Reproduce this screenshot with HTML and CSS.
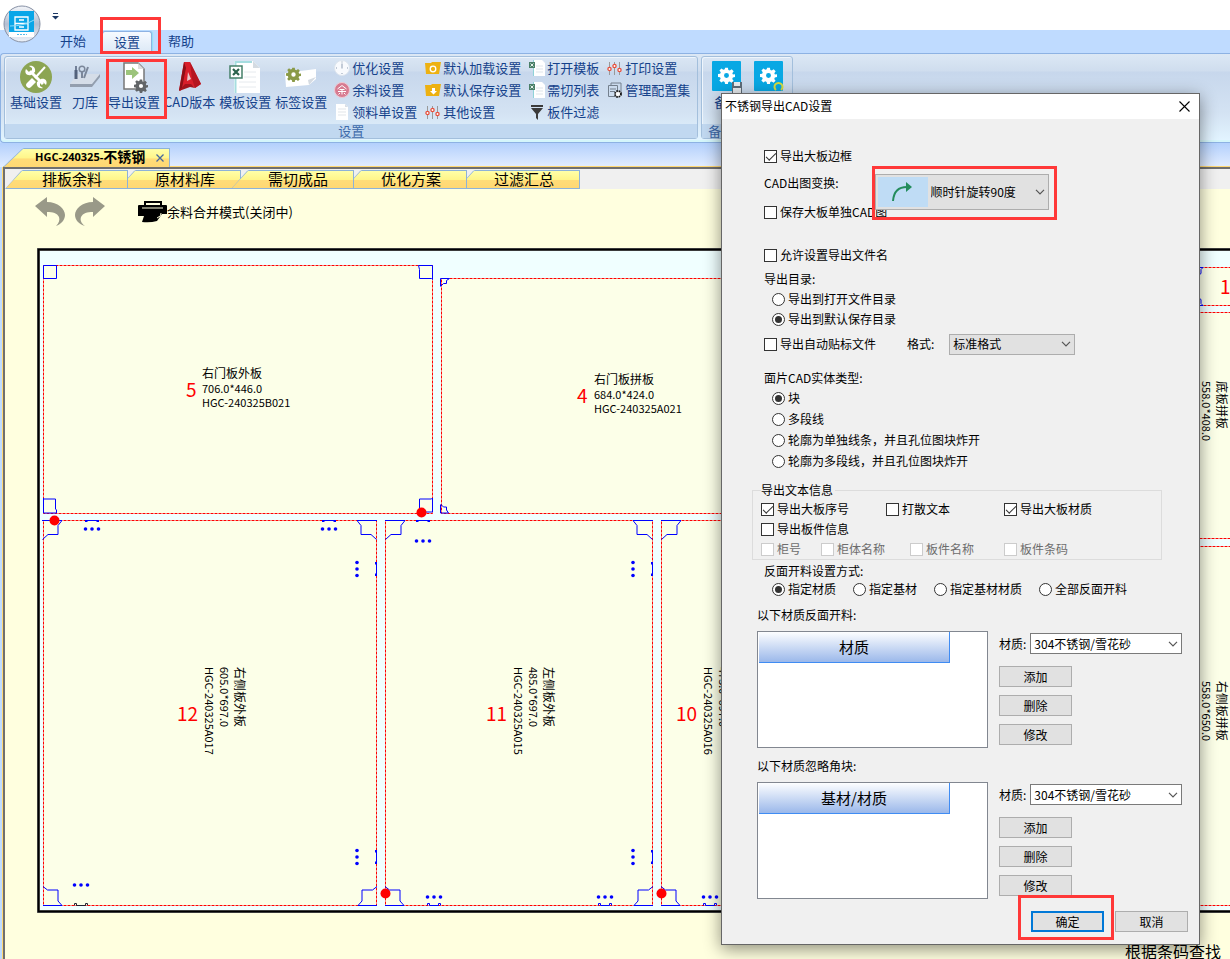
FILE: index.html
```html
<!DOCTYPE html>
<html lang="zh-CN">
<head>
  <meta charset="UTF-8">
  <meta name="viewport" content="width=device-width, initial-scale=1.0">
  <title>不锈钢导出CAD设置</title>
  <link rel="stylesheet" href="styles.css">
</head>
<body>
  <!-- shared shapes -->
  <svg class="defs" width="0" height="0" aria-hidden="true">
    <defs>
      <linearGradient id="orb" x1="0" y1="0" x2="0" y2="1">
        <stop offset="0" stop-color="#f4f6fa"/><stop offset=".5" stop-color="#b4bfd2"/><stop offset="1" stop-color="#eef3fa"/>
      </linearGradient>
      <symbol id="gear" viewBox="0 0 24 24">
        <path fill-rule="evenodd" d="M10 1h4l.6 3.2 2 .9 2.700-1.900 2.800 2.800-1.900 2.700.9 2L24 10.300v3.900l-3 .6-.9 2 1.900 2.700-2.800 2.800-2.700-1.900-2 .9L14 24h-4l-.6-3-2-.9-2.700 1.900-2.800-2.800 1.900-2.700-.9-2L0 14v-4l3-.6.9-2L2 4.800 4.800 2l2.700 1.900 2-.9zM12 8.500a3.500 3.500 0 1 0 0 7 3.500 3.500 0 0 0 0-7z"/>
      </symbol>
      <symbol id="chev" viewBox="0 0 10 6"><path d="M1 .8l4 4 4-4" fill="none" stroke="#555" stroke-width="1.200"/></symbol>
      <symbol id="sheetx" viewBox="0 0 16 16">
        <path d="M4 0h9l3 3v13H4z" fill="#fff"/><path d="M4.500 0v16" stroke="#8fd3d8"/>
        <path d="M7 6h7M7 9h7M7 12h7" stroke="#dfe5ea"/>
        <path d="M0 2h6v6H0z" fill="#4b7f68"/><path d="M1.500 3.500l3 3M4.500 3.500l-3 3" stroke="#e4f2ea"/>
      </symbol>
      <symbol id="sliders" viewBox="0 0 16 16">
        <path d="M2.500 2v13M7.500 2v13M12.500 2v13" stroke="#999" fill="none"/>
        <g fill="#fff" stroke="#e8503c" stroke-width="1.300"><circle cx="2.500" cy="9" r="1.600"/><circle cx="7.500" cy="6" r="1.600"/><circle cx="12.500" cy="10" r="1.600"/></g>
      </symbol>
      <symbol id="cornerTop" viewBox="0 0 20 20"><path d="M0 .5h20l-4 5v9H6L.5 19.500" fill="none" stroke="#00f"/></symbol>
      <symbol id="cornerBottom" viewBox="0 0 20 20"><path d="M0 .5L4.500 4H15v11l4 4.500H0" fill="none" stroke="#00f"/></symbol>
      <g id="holes" fill="#00f"><circle r="1.800" cx="-6.500"/><circle r="1.800"/><circle r="1.800" cx="6.500"/></g>
      <path id="slot" d="M-7 0v2h2l1-1H4l1 1h2V0z" fill="#00f"/>
    </defs>
  </svg>

  <header class="titlebar">
    <svg class="orb" width="38" height="38" viewBox="0 0 38 38">
      <circle cx="19" cy="19" r="18" fill="url(#orb)" stroke="#8791a5"/>
      <path d="M6 6h25v26H6z" fill="#fff"/><path d="M6 6h25v21H6z" fill="#09a6e8"/>
      <path d="M12 12h13v13H12zM12 18.500h13M16 15h5M16 22h5" fill="none" stroke="#fff" stroke-width="1.300"/>
      <path d="M7 21q14 0 24-6" stroke="#8edbf8" fill="none"/>
      <path d="M14 29.500h10" stroke="#57bce9" stroke-dasharray="2 1"/>
    </svg>
    <svg class="quick" width="7" height="7" viewBox="0 0 7 7"><path d="M1 .5h5" stroke="#1b3764"/><path d="M0 3h7L3.500 6.500z" fill="#1b3764"/></svg>
  </header>

  <nav class="menu">
    <button>开始</button>
    <button class="active marked">设置</button>
    <button>帮助</button>
  </nav>

  <section class="ribbon">
    <div class="group">
      <div class="tools">
        <button class="big">
          <svg width="32" height="32" viewBox="0 0 32 32"><circle cx="16" cy="16" r="16" fill="#8ca553"/>
            <path d="M10 10l13 13" stroke="#fff" stroke-width="3"/><path d="M6 8l3 3 3-1 0-3-3-2c4-1 7 2 6 6l-4 3c-4 1-7-2-5-6zM26 24l-3-3-3 1 0 3 3 2c-4 1-7-2-6-6l4-3c4-1 7 2 5 6z" fill="#fff"/>
            <path d="M25 6L15 17" stroke="#fff" stroke-width="2"/><path d="M7 22l5-5 4 4-5 5q-2 2-4 0-2-2 0-4z" fill="#fff"/></svg>
          基础设置
        </button>
        <button class="big">
          <svg width="32" height="32" viewBox="0 0 32 32"><path d="M8 13h23l-8 10H1z" fill="#d5dde8"/><path d="M1 23h22v3H1zM23 23l8-10v3l-8 10z" fill="#939eae"/>
            <path d="M7 9v9" stroke="#52617b" stroke-width="3"/><path d="M7 5v4" stroke="#52617b" stroke-width="1.500"/><circle cx="13" cy="8" r="2.800" fill="none" stroke="#7b879a" stroke-width="1.500"/><path d="M13 11v6M19 6l-4 11" stroke="#7b879a" stroke-width="2"/></svg>
          刀库
        </button>
        <button class="big marked">
          <svg width="32" height="32" viewBox="0 0 32 32"><path d="M6 2h14l6 6v20H6z" fill="#fff" stroke="#777" stroke-width="1.500"/><path d="M20 2v6h6z" fill="#ddd"/>
            <path d="M8 9h6V6l7 6-7 6v-4H8z" fill="#9cc47b"/><use href="#gear" x="16" y="18" width="14" height="14" fill="#626568"/></svg>
          导出设置
        </button>
        <button class="big">
          <svg width="32" height="32" viewBox="0 0 32 32"><path d="M10 1l6 0 11 22-6 4-5-4-5 2-5 5-1-1z" fill="#d91e2a"/><path d="M10 1l2 6-4 20-3 3z" fill="#8d1017"/><path d="M14 11l3 7-4 2z" fill="#eac9cb"/><path d="M16 1l11 22-6 4-3-9z" fill="#b51520"/><path d="M5 30l6-7h6l4 4-5-1z" fill="#a3131c"/></svg>
          CAD版本
        </button>
        <button class="big">
          <svg width="32" height="32" viewBox="0 0 32 32"><path d="M5 0h19l7 7v25H5z" fill="#fff"/><path d="M6.500 0v32M6 1h17" stroke="#a6dde0" stroke-width="2" fill="none"/><path d="M24 0v7h7z" fill="#d4dbe2"/>
            <path d="M15 11h12M15 16h12M10 21h17M10 26h17" stroke="#e6eaee"/><path d="M1 5h12v12H1z" fill="#fff" stroke="#46806a" stroke-width="1.500"/><path d="M4 8l6 6M10 8l-6 6" stroke="#2b624c" stroke-width="2.200"/></svg>
          模板设置
        </button>
        <button class="big">
          <svg width="32" height="32" viewBox="0 0 32 32"><path d="M0 12l31-4v10l-7 6-23 2z" fill="#fff"/><path d="M24 24l-1-5 8-3z" fill="#d5dbe2"/><use href="#gear" x="1" y="6" width="15" height="15" fill="#8a9a47"/></svg>
          标签设置
        </button>
        <div class="columns">
          <button class="small"><svg width="16" height="16" viewBox="0 0 16 16"><circle cx="8" cy="8" r="7.500" fill="#f8fafd" stroke="#dde5ee"/><path d="M8 3.500V8.500M8 1.500v1M8 13v1M2 8h1M13 8h1" stroke="#8d9cb1"/></svg>优化设置</button>
          <button class="small"><svg width="16" height="16" viewBox="0 0 16 16"><circle cx="8" cy="8" r="7.500" fill="#d77b91" stroke="#efc8d1"/><path d="M8 3.500L3.500 7M8 3.500L12.500 7M5.500 7.500h5M4 9.500h8M8 7.500v5M6 11l-1.500 1.500M10 11l1.500 1.500" stroke="#fff" fill="none"/></svg>余料设置</button>
          <button class="small"><svg width="16" height="16" viewBox="0 0 16 16"><path d="M2 0h9l3 3v13H2z" fill="#fff"/><path d="M4 5h8M4 8h8M4 11h8" stroke="#e1e5e9"/><path d="M11 0v3h3z" fill="#d8dee5"/></svg>领料单设置</button>
          <button class="small"><svg width="16" height="16" viewBox="0 0 16 16"><path d="M0 3h6l1-1h9l-2 12H1z" fill="#edb111"/><circle cx="8" cy="9" r="2.800" fill="none" stroke="#fff" stroke-width="1.300"/></svg>默认加载设置</button>
          <button class="small"><svg width="16" height="16" viewBox="0 0 16 16"><path d="M0 3h6l1-1h9l-2 12H1z" fill="#edb111"/><path d="M7 6h3v3h2l-3.500 3.500L5 9h2z" fill="#fff"/></svg>默认保存设置</button>
          <button class="small"><svg width="16" height="16"><use href="#sliders"/></svg>其他设置</button>
          <button class="small"><svg width="16" height="16"><use href="#sheetx"/></svg>打开模板</button>
          <button class="small"><svg width="16" height="16"><use href="#sheetx"/></svg>需切列表</button>
          <button class="small"><svg width="16" height="16" viewBox="0 0 16 16"><path d="M2 1h12v2H2zM2 4h12l-5 6v6l-2-2v-4z" fill="#3b3b3b"/></svg>板件过滤</button>
          <button class="small"><svg width="16" height="16"><use href="#sliders"/></svg>打印设置</button>
          <button class="small"><svg width="16" height="16" viewBox="0 0 16 16"><path d="M4 3V1h10v10M1.500 3.500h9v11h-9zM3 7h6M3 9.500h5" fill="none" stroke="#74808e"/><circle cx="11" cy="12" r="3" fill="#fff" stroke="#111" stroke-width="1.800" stroke-dasharray="1.600 .8"/></svg>管理配置集</button>
        </div>
      </div>
      <p class="caption">设置</p>
    </div>
    <div class="group backup">
      <div class="tools">
        <button class="big"><svg width="32" height="32" viewBox="0 0 32 32"><rect x="1" width="29" height="30" rx="1" fill="#08a8e4"/><use href="#gear" x="7" y="6" width="17" height="17" fill="#fff"/><path d="M21 21h10v11H21z" fill="#5f6c78"/><path d="M23 21h6v4h-6zM22 27h8v5h-8z" fill="#e9edf0"/></svg>备份</button>
        <button class="big" aria-label="恢复"><svg width="32" height="32" viewBox="0 0 32 32"><rect x="1" width="29" height="30" rx="1" fill="#08a8e4"/><use href="#gear" x="7" y="6" width="17" height="17" fill="#fff"/><path d="M23 29a4 4 0 1 1 5 0" fill="none" stroke="#d9dc3e" stroke-width="2"/></svg></button>
      </div>
      <p class="caption">备份</p>
    </div>
  </section>

  <div class="docs">
    <button class="doc-tab"><span class="code">HGC-240325-</span><span>不锈钢</span>
      <svg width="8" height="8" viewBox="0 0 8 8"><path d="M.5.5l7 7M7.500.5l-7 7" stroke="#4a6a9c" stroke-width="1.300"/></svg>
    </button>
  </div>

  <main class="work">
    <div class="views">
      <button>排板余料</button>
      <button>原材料库</button>
      <button class="front">需切成品</button>
      <button>优化方案</button>
      <button>过滤汇总</button>
    </div>
    <div class="toolbar">
      <button aria-label="撤销"><svg width="30" height="30" viewBox="0 0 30 30"><path d="M0 9L12 0v5c11 0 18 7 18 13 0 5-4 9-9 11 3-3 4-6 3-9-2-4-6-5-12-5v5z" fill="#999988"/></svg></button>
      <button aria-label="重做"><svg width="30" height="30" viewBox="0 0 30 30"><path d="M30 9L18 0v5C7 5 0 12 0 18c0 5 4 9 10 11-4-3-5-6-4-9 2-4 6-5 12-5v5z" fill="#999988"/></svg></button>
      <button class="merge"><svg width="29" height="22" viewBox="0 0 29 22"><path d="M6 0h18v4h4q1 0 1 1v8h-5l-5 7q-7 2-15 1l2-6H0V5q0-1 1-1h5zM8 2v2h14V2z" fill="#000"/><path d="M4 7h21" stroke="#ffd"/><path d="M23 12q1 3-4 5" stroke="#ffd" fill="none"/></svg>余料合并模式(关闭中)</button>
    </div>

    <svg class="sheet">
      <g transform="translate(-5 -235)">
        <rect x="38.500" y="249.500" width="1300" height="662" fill="#f0ffff" stroke="#777" stroke-width="3"/>
        <rect x="38.500" y="249.500" width="1300" height="662" fill="none" stroke="#000" stroke-width="2"/>
        <g class="parts">
          <path d="M43.500 265.500h389v248h-389zM441.500 278.500h377v235h-377zM43.500 520.500h333v385h-333zM385.500 520.500h267v385h-267zM661.500 520.500h267v385h-267z"/>
          <path d="M1100.500 267.500h200v38h-200zM1100.500 312.500h200v226h-200zM1100.500 546.500h200v359h-200z"/>
        </g>
        <g fill="none" stroke="#00f">
          <path d="M43.500 265.500h13v13h-13zM418.500 265.500h14v14l-1-1h-12v-9zM43.500 498v15h13v-3l-1-1v-10h-12M432.500 498v14h-13v-13h12z"/>
          <path d="M440.500 286v-7.500h9l-3 2v3h-3l-3 3M440.500 505v8h8l-2-3v-3h-3l-3-3"/>
          <path d="M1195 267.500h8l-2 2v4l-3 2M1195 305.500h8l-2-2v-4l-3-2"/>
        </g>
        <use href="#cornerTop" x="42" y="520" width="20" height="20"/>
        <use href="#cornerTop" x="385" y="520" width="20" height="20"/>
        <use href="#cornerTop" x="661" y="520" width="20" height="20"/>
        <use href="#cornerTop" x="-377" y="520" width="20" height="20" transform="scale(-1 1)"/>
        <use href="#cornerTop" x="-653" y="520" width="20" height="20" transform="scale(-1 1)"/>
        <use href="#cornerBottom" x="43" y="886" width="20" height="20"/>
        <use href="#cornerBottom" x="385" y="886" width="20" height="20"/>
        <use href="#cornerBottom" x="661" y="886" width="20" height="20"/>
        <use href="#cornerBottom" x="-377" y="886" width="20" height="20" transform="scale(-1 1)"/>
        <use href="#cornerBottom" x="-653" y="886" width="20" height="20" transform="scale(-1 1)"/>
        <use href="#holes" x="92" y="529"/><use href="#holes" x="329" y="529"/><use href="#holes" x="423" y="541"/>
        <use href="#holes" x="81" y="885"/><use href="#holes" x="434" y="897"/><use href="#holes" x="605" y="897"/><use href="#holes" x="710" y="897"/>
        <use href="#holes" transform="translate(357 569) rotate(90)"/><use href="#holes" transform="translate(633 569) rotate(90)"/>
        <use href="#holes" transform="translate(357 857) rotate(90)"/><use href="#holes" transform="translate(633 857) rotate(90)"/>
        <use href="#slot" x="92" y="520"/><use href="#slot" x="329" y="520"/><use href="#slot" x="423" y="520"/>
        <use href="#slot" transform="translate(377 569) rotate(90)"/><use href="#slot" transform="translate(653 569) rotate(90)"/>
        <use href="#slot" transform="translate(377 857) rotate(90)"/><use href="#slot" transform="translate(653 857) rotate(90)"/>
        <g fill="none" stroke="#00f"><path d="M427.500 905.500v-2h2v2h9v-2h2v2M598.500 905.500v-2h2v2h9v-2h2v2M703.500 905.500v-2h2v2h9v-2h2v2"/><path d="M74.500 905.500v-2h2v2h9v-2h2v2" stroke="#223"/></g>
        <g fill="#f00"><circle cx="54.500" cy="520.500" r="5"/><circle cx="421.500" cy="512.500" r="5"/><circle cx="385.500" cy="893.500" r="5"/><circle cx="661.500" cy="893.500" r="5"/></g>

        <g class="num"><text x="186" y="397">5</text><text x="577" y="403">4</text><text x="177" y="721">12</text><text x="486" y="721">11</text><text x="676" y="721">10</text><text x="1220" y="294">1</text></g>
        <g class="label" transform="translate(202 378)"><text class="name">右门板外板</text><text y="15">706.0*446.0</text><text y="29">HGC-240325B021</text></g>
        <g class="label" transform="translate(594 384)"><text class="name">右门板拼板</text><text y="15">684.0*424.0</text><text y="29">HGC-240325A021</text></g>
        <g class="label" transform="translate(235 667) rotate(90)"><text class="name">右侧板外板</text><text y="15">605.0*697.0</text><text y="30">HGC-240325A017</text></g>
        <g class="label" transform="translate(544 667) rotate(90)"><text class="name">左侧板外板</text><text y="15">485.0*697.0</text><text y="30">HGC-240325A015</text></g>
        <g class="label" transform="translate(734 667) rotate(90)"><text y="15">475.0*697.0</text><text y="30">HGC-240325A016</text></g>
        <g class="label" transform="translate(1217 381) rotate(90)"><text class="name">底板拼板</text><text y="15">558.0*408.0</text></g>
        <g class="label" transform="translate(1217 681) rotate(90)"><text class="name">右侧板拼板</text><text y="15">558.0*650.0</text></g>
      </g>
    </svg>
    <p class="find">根据条码查找</p>
  </main>

  <form class="dialog" role="dialog" aria-labelledby="dlgTitle">
    <div class="dialog-title">
      <h1 id="dlgTitle">不锈钢导出CAD设置</h1>
      <button type="button" aria-label="关闭"><svg width="11" height="11" viewBox="0 0 11 11"><path d="M.5.5l10 10M10.500.5l-10 10" stroke="#000" stroke-width="1.100"/></svg></button>
    </div>
    <div class="dialog-body">
      <div class="section spaced">
        <label class="row"><input type="checkbox" checked>导出大板边框</label>
        <div class="row rotate-row">
          <label for="rotate">CAD出图变换:</label>
          <span class="select rotate marked">
            <select id="rotate"><option>顺时针旋转90度</option></select>
            <svg class="turn" width="50" height="30" viewBox="0 0 50 30"><path d="M0 0h50v30H0z" fill="#bfdcf5"/><path d="M15 24Q16 10 29 10" fill="none" stroke="#238c5c" stroke-width="2"/><path d="M28 5l6 5-6 5z" fill="#238c5c"/></svg>
            <svg class="chev" width="10" height="6"><use href="#chev"/></svg>
          </span>
        </div>
        <label class="row"><input type="checkbox">保存大板单独CAD图</label>
      </div>

      <div class="section files">
        <label class="row"><input type="checkbox">允许设置导出文件名</label>
        <p class="row dir">导出目录:</p>
        <label class="row indent"><input type="radio" name="dir">导出到打开文件目录</label>
        <label class="row indent"><input type="radio" name="dir" checked>导出到默认保存目录</label>
        <div class="row auto">
          <label><input type="checkbox">导出自动贴标文件</label>
          <label class="format" for="format">格式:</label>
          <span class="select grey">
            <select id="format"><option>标准格式</option></select>
            <svg class="chev" width="10" height="6"><use href="#chev"/></svg>
          </span>
        </div>
      </div>

      <div class="section entity">
        <p class="row">面片CAD实体类型:</p>
        <label class="row indent"><input type="radio" name="entity" checked>块</label>
        <label class="row indent"><input type="radio" name="entity">多段线</label>
        <label class="row indent"><input type="radio" name="entity">轮廓为单独线条，并且孔位图块炸开</label>
        <label class="row indent"><input type="radio" name="entity">轮廓为多段线，并且孔位图块炸开</label>
      </div>

      <fieldset>
        <legend>导出文本信息</legend>
        <div class="checks">
          <label class="c1"><input type="checkbox" checked>导出大板序号</label>
          <label class="c3"><input type="checkbox">打散文本</label>
          <label class="c5"><input type="checkbox" checked>导出大板材质</label>
          <label class="c1"><input type="checkbox">导出板件信息</label>
          <label class="c1 off"><input type="checkbox" disabled>柜号</label>
          <label class="c2 off"><input type="checkbox" disabled>柜体名称</label>
          <label class="c4 off"><input type="checkbox" disabled>板件名称</label>
          <label class="c5 off"><input type="checkbox" disabled>板件条码</label>
        </div>
      </fieldset>

      <div class="section reverse">
        <p>反面开料设置方式:</p>
        <div class="radios">
          <label><input type="radio" name="rev" checked>指定材质</label>
          <label><input type="radio" name="rev">指定基材</label>
          <label><input type="radio" name="rev">指定基材材质</label>
          <label><input type="radio" name="rev">全部反面开料</label>
        </div>
      </div>

      <div class="material">
        <p>以下材质反面开料:</p>
        <div class="pair">
          <div class="list"><table><tr><th>材质</th></tr></table></div>
          <div class="side">
            <div class="pick"><label for="mat1">材质:</label>
              <span class="select"><select id="mat1"><option>304不锈钢/雪花砂</option></select><svg class="chev" width="10" height="6"><use href="#chev"/></svg></span>
            </div>
            <button type="button" class="btn">添加</button>
            <button type="button" class="btn">删除</button>
            <button type="button" class="btn">修改</button>
          </div>
        </div>
      </div>
      <div class="material">
        <p>以下材质忽略角块:</p>
        <div class="pair">
          <div class="list"><table><tr><th>基材/材质</th></tr></table></div>
          <div class="side">
            <div class="pick"><label for="mat2">材质:</label>
              <span class="select"><select id="mat2"><option>304不锈钢/雪花砂</option></select><svg class="chev" width="10" height="6"><use href="#chev"/></svg></span>
            </div>
            <button type="button" class="btn">添加</button>
            <button type="button" class="btn">删除</button>
            <button type="button" class="btn">修改</button>
          </div>
        </div>
      </div>

      <div class="actions">
        <button type="button" class="btn primary marked">确定</button>
        <button type="button" class="btn">取消</button>
      </div>
    </div>
  </form>
</body>
</html>
```
FILE: styles.css
```css
* {
  box-sizing: border-box;
}
body {
  margin: 0;
  height: 100vh;
  overflow: hidden;
  position: relative;
  display: flex;
  flex-direction: column;
  background: #bfdbff;
  color: #000;
  font: 12px/18px "Noto Sans CJK SC", sans-serif;
}
p, h1 {
  margin: 0;
  font-size: inherit;
  font-weight: normal;
}
button, select, input {
  font: inherit;
  color: inherit;
  margin: 0;
}
button {
  padding: 0;
  border: 0;
  background: none;
  white-space: nowrap;
}
svg {
  flex: none;
}
.defs {
  position: absolute;
}

/* red frames round the steps to follow */
.marked {
  position: relative;
}
.marked::after {
  content: "";
  position: absolute;
  z-index: 2;
  border: 3px solid #ff3838;
  pointer-events: none;
}

/* title and menu */
.titlebar {
  flex: none;
  height: 30px;
  background: #fff;
  position: relative;
}
.orb {
  position: absolute;
  left: 3px;
  top: 5px;
  z-index: 1;
}
.quick {
  position: absolute;
  left: 52px;
  top: 13px;
}
.menu {
  flex: none;
  display: flex;
  gap: 4px;
  height: 23px;
  padding: 1px 0 0 48px;
  color: #15428b;
  font-size: 13px;
}
.menu button {
  width: 50px;
  padding-bottom: 2px;
  border-radius: 3px 3px 0 0;
}
.menu .active {
  border: 1px solid #8db2e3;
  border-bottom: 0;
  background: linear-gradient(#f6faff, #dbe8f6);
  box-shadow: 1px 0 1px #8fe0f5;
}
.menu .marked::after {
  inset: -15px -10px -1px -3px;
}

/* ribbon */
.ribbon {
  flex: none;
  display: flex;
  gap: 3px;
  height: 90px;
  padding: 2px 0 3px 3px;
  border: 1px solid #8db2e3;
  border-right: 0;
  border-radius: 4px 0 0 4px;
  background: linear-gradient(#dce8f5 0, #cfddee 17px, #c7d7ec 18px, #d4e3f3 60px, #e2f4ff 86px);
  box-shadow: inset 0 -2px 0 #d4f6fb;
  color: #15428b;
  font-size: 13px;
}
.group {
  display: flex;
  flex-direction: column;
  border: 1px solid #a3bfdc;
  border-radius: 3px;
  box-shadow: inset 1px 1px 0 #eef5fc;
}
.tools {
  display: flex;
  gap: 4px;
  height: 68px;
  padding: 0 7px 0 5px;
}
.caption {
  flex: 1;
  background: #c1d8f0;
  color: #3e6aaa;
  text-align: center;
  line-height: 14px;
}
.big {
  min-width: 38px;
  height: 60px;
  padding-top: 4px;
  display: flex;
  flex-direction: column;
  align-items: center;
}
.big.marked::after {
  inset: 2px -7px -2px -2px;
}
.columns {
  display: grid;
  grid-template-rows: repeat(3, 22px);
  grid-auto-flow: column;
  column-gap: 8px;
  padding-left: 3px;
}
.small {
  display: flex;
  align-items: center;
  gap: 2px;
}
.backup .tools {
  width: 90px;
  padding: 0 6px;
}
.backup .caption {
  padding-left: 6px;
  text-align: left;
}

/* open document */
.docs {
  flex: none;
  height: 24px;
  padding: 5px 0 0 3px;
  background: linear-gradient(#b3d0fc, #e2edff);
}
.doc-tab {
  position: relative;
  z-index: 0;
  display: flex;
  align-items: center;
  width: 167px;
  height: 19px;
  padding: 0 6px 3px 32px;
  background: #8db2d8;
  clip-path: polygon(0 100%, 19px 1px, 21px 0, 100% 0, 100% 100%);
  font-size: 14px;
  font-weight: bold;
}
.doc-tab::before, .views button::before {
  content: "";
  position: absolute;
  z-index: -1;
  inset: 1px 1px 0 1px;
  background: linear-gradient(#ffffa8 0, #fff58a 50%, #ffdc78 55%, #ffd873 100%);
}
.doc-tab::before {
  clip-path: polygon(0 100%, 19px 0, 100% 0, 100% 100%);
}
.doc-tab .code {
  font: bold 11px "Open Sans", sans-serif;
}
.doc-tab svg {
  margin: 4px 0 0 auto;
}

/* work area */
.work {
  flex: 1;
  min-height: 0;
  display: flex;
  flex-direction: column;
  margin-left: 3px;
  border: solid #6f6f6f;
  border-width: 2px 0 0 2px;
  background: #ffffdf;
  box-shadow: 0 -1px 0 #ffd873, -1px 0 0 #ffd873;
}
.views {
  flex: none;
  display: flex;
  height: 20px;
  padding-top: 1px;
  background: #f0f0f0;
}
.views button {
  position: relative;
  z-index: 1;
  width: 123px;
  margin-right: -10px;
  padding: 0 0 3px 11px;
  background: #8db2d8;
  clip-path: polygon(0 100%, 16px 1px, 18px 0, 100% 0, 100% 100%);
  font-size: 15px;
}
.views button::before {
  inset: 1px;
  clip-path: polygon(0 100%, 16px 0, 100% 0, 100% 100%);
}
.views button:nth-child(1) {
  z-index: 5;
}
.views button:nth-child(2) {
  z-index: 4;
}
.views .front {
  z-index: 6;
}
.views button:nth-child(4) {
  z-index: 3;
}
.toolbar {
  flex: none;
  display: flex;
  align-items: center;
  gap: 10px;
  height: 46px;
  padding-left: 30px;
}
.toolbar button {
  display: flex;
  align-items: center;
}
.toolbar .merge {
  margin-left: 23px;
  font-size: 13px;
}
.sheet {
  display: block;
  width: 100%;
  height: 708px;
}
.parts path {
  fill: #fcffe8;
  stroke: #f00;
  stroke-dasharray: 3 1;
}
.num {
  fill: #f00;
  font-size: 19px;
}
.label {
  font-size: 11px;
}
.label .name {
  font-size: 12px;
}
.find {
  padding-right: 9px;
  text-align: right;
  font-size: 16px;
  line-height: 16px;
}

/* dialog */
.dialog {
  position: absolute;
  top: 93px;
  right: 30px;
  z-index: 10;
  width: 479px;
  border: 1px solid #666;
  background: #f0f0f0;
  box-shadow: 0 4px 16px rgba(0, 0, 0, .45);
}
.dialog-title {
  display: flex;
  justify-content: space-between;
  height: 25px;
  padding: 0 9px 0 3px;
  background: #fff;
}
.dialog-title h1 {
  line-height: 24px;
}
.dialog-title button {
  display: flex;
  align-items: center;
}
.dialog-body {
  padding: 27px 11px 12px 30px;
}
.dialog-body label {
  display: flex;
  align-items: center;
  gap: 3px;
  white-space: nowrap;
}
.row {
  display: flex;
  align-items: center;
  height: 20px;
}
.section {
  padding-left: 12px;
}
.spaced {
  display: grid;
  gap: 8px;
}
.indent {
  margin-left: 8px;
}
.files {
  margin-top: 23px;
}
.dir {
  margin-top: 4px;
}
.auto {
  margin-top: 5px;
}
.auto .format {
  margin: 0 15px 0 31px;
}
.entity {
  margin-top: 14px;
  display: grid;
}
.entity .indent + .indent {
  margin-top: 1px;
}

input[type="checkbox"], input[type="radio"] {
  appearance: none;
  flex: none;
  position: relative;
  width: 13px;
  height: 13px;
  border: 1px solid #333;
  background: #fff;
}
input[type="radio"] {
  border-radius: 50%;
}
input[type="radio"]:checked::before {
  content: "";
  position: absolute;
  inset: 2px;
  border-radius: 50%;
  background: #333;
}
input[type="checkbox"]:checked::before {
  content: "";
  position: absolute;
  left: 1px;
  top: 2px;
  width: 9px;
  height: 4px;
  border: solid #333;
  border-width: 0 0 1px 1px;
  transform: rotate(-45deg);
}
input[type="checkbox"]:disabled {
  border-color: #ccc;
}
.off {
  color: #6d6d6d;
}

.select {
  position: relative;
  display: block;
  width: 152px;
}
.select select {
  appearance: none;
  display: block;
  width: 100%;
  height: 21px;
  padding: 0 20px 0 3px;
  border: 1px solid #7a7a7a;
  border-radius: 0;
  background: #fff;
}
.select .chev {
  position: absolute;
  right: 4px;
  top: 50%;
  margin-top: -3px;
  pointer-events: none;
}
.select.grey {
  width: 126px;
}
.grey select, .rotate select {
  border-color: #adadad;
  background: #e1e1e1;
}
.rotate-row {
  align-items: flex-start;
}
.select.rotate {
  z-index: 1;
  width: 174px;
  margin-left: 36px;
}
.rotate select {
  height: 36px;
  padding-left: 55px;
}
.rotate .turn {
  position: absolute;
  left: 3px;
  top: 3px;
  pointer-events: none;
}
.rotate.marked::after {
  inset: -8px -8px -10px -3px;
}

fieldset {
  width: 410px;
  margin: 10px 0 0;
  padding: 0 0 0 8px;
  border: 1px solid #dcdcdc;
}
legend {
  padding: 0 2px 0 0;
}
.checks {
  display: grid;
  grid-template-columns: 60px 65px 24px 94px auto;
  grid-auto-rows: 20px;
}
.c1 {
  grid-column: 1;
}
.c2 {
  grid-column: 2;
}
.c3 {
  grid-column: 3;
}
.c4 {
  grid-column: 4;
}
.c5 {
  grid-column: 5;
}
.reverse {
  margin-top: 2px;
}
.radios {
  display: flex;
  gap: 17px;
  padding-left: 8px;
}

.material {
  margin-top: 7px;
  padding-left: 5px;
}
.material + .material {
  margin-top: 8px;
}
.material p {
  line-height: 20px;
}
.pair {
  display: flex;
  gap: 11px;
  margin-top: 6px;
}
.list {
  width: 231px;
  height: 117px;
  padding: 0 1px;
  border: 1px solid #828790;
  background: #fff;
}
.list table {
  border-spacing: 0;
}
.list th {
  width: 191px;
  height: 31px;
  padding: 0;
  border: solid #3f8cf3;
  border-width: 0 1px 1px 0;
  background: linear-gradient(#fdfeff, #9bb8ea);
  font-size: 15px;
  font-weight: normal;
}
.side {
  display: flex;
  flex-direction: column;
  gap: 8px;
  padding-top: 2px;
}
.pick {
  display: flex;
  align-items: center;
  gap: 4px;
  margin-bottom: 4px;
}
.btn {
  width: 73px;
  height: 21px;
  border: 1px solid #adadad;
  background: #e1e1e1;
}
.actions {
  display: flex;
  justify-content: flex-end;
  gap: 11px;
  margin-top: 12px;
}
.primary {
  border: 2px solid #0078d7;
}
.primary.marked::after {
  inset: -18px -12px -10px -15px;
}
```
